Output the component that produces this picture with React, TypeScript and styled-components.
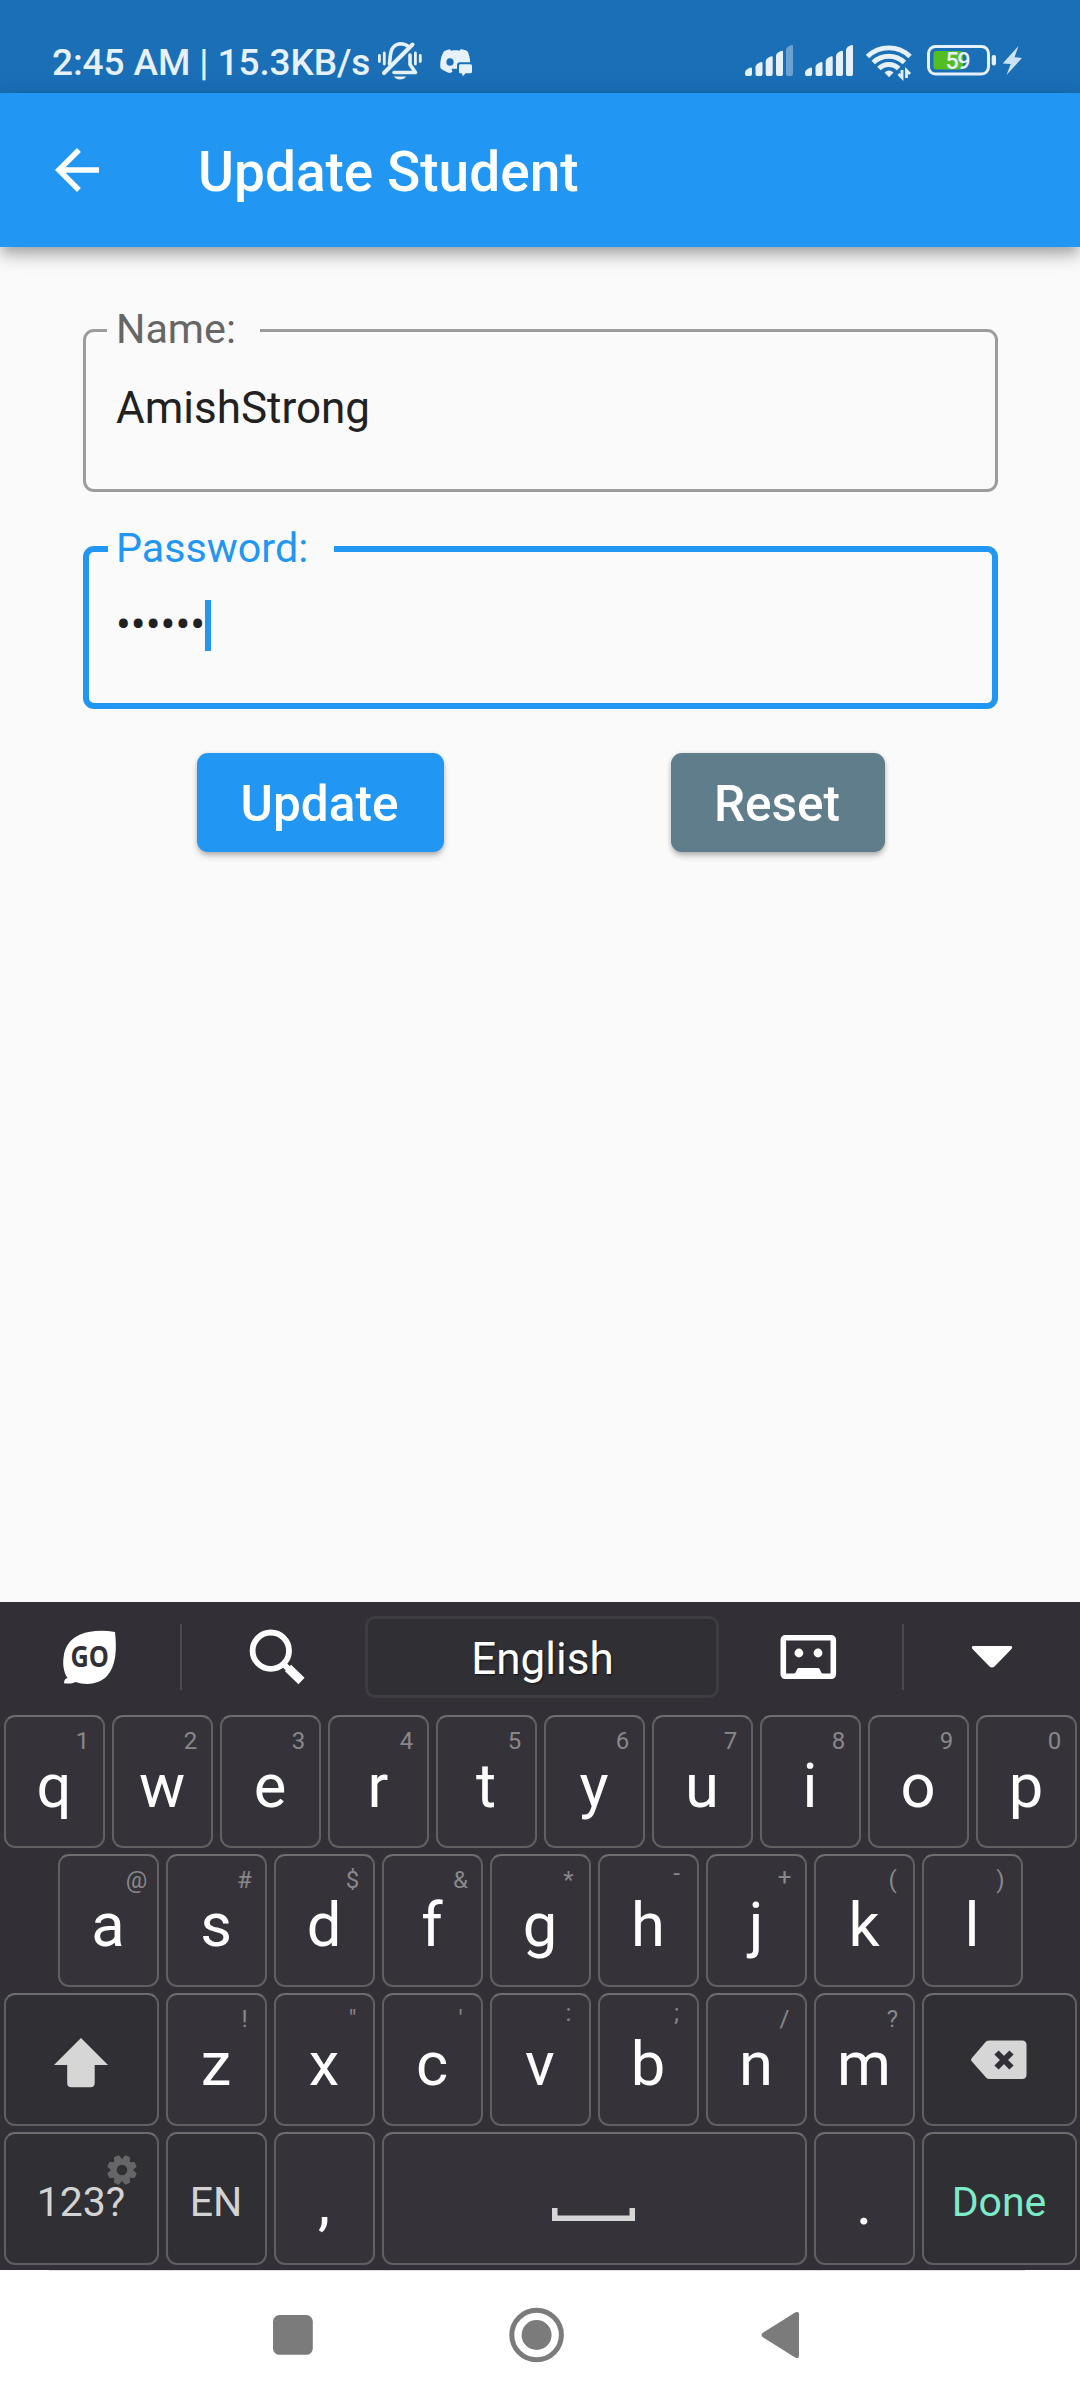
import React from 'react';
import styled, { createGlobalStyle } from 'styled-components';

const GlobalStyle = createGlobalStyle`
  * { box-sizing: border-box; }
  body { margin: 0; background: #fff; }
  svg { display: block; }
`;

const Screen = styled.div`
  width: 1080px;
  height: 2400px;
  display: flex;
  flex-direction: column;
  overflow: hidden;
  background: #fafafa;
  font-family: Roboto, 'Liberation Sans', sans-serif;
`;

/* ---------- status bar ---------- */

const StatusBar = styled.header`
  height: 93px;
  flex: none;
  display: flex;
  align-items: flex-start;
  justify-content: space-between;
  padding: 40px 56px 0 52px;
  background: #1a6fb7;
  color: #e6f1fb;
`;

const StatusGroup = styled.div`
  display: flex;
  height: 44px;
`;

const Clock = styled.span`
  width: 325px;
  padding-top: 1px;
  font-size: 37px;
  font-weight: 500;
  letter-spacing: -0.1px;
  line-height: 44px;
  white-space: nowrap;
`;

const NotificationIcons = styled.div`
  display: flex;
  gap: 15px;
`;

/* ---------- app bar ---------- */

const AppBar = styled.div`
  position: relative;
  height: 154px;
  flex: none;
  display: flex;
  align-items: center;
  padding-left: 44px;
  gap: 88px;
  background: #2196f3;
  color: #fff;
  box-shadow: 0 5.5px 11px -2.75px rgba(0, 0, 0, 0.2), 0 11px 13.75px rgba(0, 0, 0, 0.14),
    0 2.75px 27.5px rgba(0, 0, 0, 0.12);
`;

const Title = styled.h1`
  margin: 3px 0 0;
  font-size: 55px;
  font-weight: 500;
  line-height: 64px;
  white-space: nowrap;
`;

/* ---------- form ---------- */

const Form = styled.main`
  flex: 1;
  display: flex;
  flex-direction: column;
  padding: 82px 82px 0 83px;
`;

const Field = styled.div<{ $active?: boolean }>`
  position: relative;
  height: 163px;
  display: flex;
  align-items: flex-start;
  padding: ${p => (p.$active ? '47px 27px 0' : '50px 30px 0')};
  border: ${p => (p.$active ? '6px solid #2196f3' : '3px solid #9c9c9c')};
  border-radius: 11px;
  color: ${p => (p.$active ? '#2196f3' : '#666')};
  & + & { margin-top: 54px; }
`;

const FieldLabel = styled.label<{ $width: number; $active?: boolean }>`
  position: absolute;
  left: ${p => (p.$active ? 19 : 21)}px;
  top: ${p => (p.$active ? -28 : -27)}px;
  width: ${p => p.$width}px;
  padding-left: ${p => (p.$active ? 8 : 9)}px;
  background: #fafafa;
  font-size: 41.25px;
  line-height: 48px;
  white-space: nowrap;
`;

const Value = styled.span`
  color: #212121;
  font-size: 44px;
  line-height: 52px;
  white-space: nowrap;
`;

const Caret = styled.i`
  width: 6px;
  height: 51px;
  margin: 1px 0 0;
  background: #2196f3;
`;

const Actions = styled.div`
  display: flex;
  justify-content: space-around;
  margin-top: 44px;
`;

const Button = styled.button<{ $bg: string; $width: number }>`
  width: ${p => p.$width}px;
  height: 99px;
  padding: 3px 1px 0 0;
  border: 0;
  border-radius: 11px;
  background: ${p => p.$bg};
  color: #fff;
  font: 500 49.5px/58px Roboto, 'Liberation Sans', sans-serif;
  box-shadow: 0 5px 6px -1px rgba(0, 0, 0, 0.22), 0 1px 5px rgba(0, 0, 0, 0.16);
`;

/* ---------- keyboard ---------- */

const Keyboard = styled.section`
  height: 668px;
  flex: none;
  display: flex;
  flex-direction: column;
  background: #323036;
`;

const Toolbar = styled.div`
  height: 113px;
  flex: none;
  display: flex;
  align-items: flex-start;
  padding-top: 14px;
`;

const Tool = styled.div<{ $width: number }>`
  width: ${p => p.$width}px;
  height: 82px;
  display: flex;
  align-items: center;
  justify-content: center;
`;

const Separator = styled.div`
  width: 2px;
  height: 66px;
  margin-top: 8px;
  background: #4b4a4e;
`;

const Language = styled.div`
  width: 354px;
  height: 82px;
  padding: 1px 0 0 1px;
  border: 3px solid #3e3d42;
  border-radius: 10px;
  background: #302f34;
  color: #fff;
  font-size: 44px;
  line-height: 79px;
  text-align: center;
  text-shadow: 1px 1px 2px rgba(0, 0, 0, 0.6);
`;

const Rows = styled.div`
  display: flex;
  flex-direction: column;
  gap: 6px;
`;

const Row = styled.div`
  display: flex;
  justify-content: center;
  gap: 7px;
`;

const Key = styled.div<{ $width?: number; $dark?: boolean }>`
  position: relative;
  width: ${p => p.$width ?? 101}px;
  height: 133px;
  display: flex;
  align-items: center;
  justify-content: center;
  border: 2px solid #605f62;
  border-top-color: #6d6c6e;
  border-radius: 11px;
  background: ${p => (p.$dark ? '#302f34' : '#353339')};
`;

const Letter = styled.span`
  padding-top: 9px;
  color: #fff;
  font-size: 61.5px;
  line-height: 72px;
`;

const Caption = styled.span<{ $color?: string }>`
  padding-top: 7px;
  color: ${p => p.$color ?? '#d3d3d3'};
  font-size: 41px;
  line-height: 48px;
`;

const Hint = styled.span<{ $raise: number }>`
  position: absolute;
  left: 57px;
  top: ${p => 10 - p.$raise}px;
  width: 40px;
  color: #88878a;
  font-size: 24px;
  line-height: 28px;
  text-align: center;
`;

const KeyBadge = styled.div`
  position: absolute;
  left: 101px;
  top: 21px;
`;

/* ---------- navigation bar ---------- */

const NavBar = styled.nav`
  height: 130px;
  flex: none;
  display: flex;
  flex-direction: column;
  background: #fff;
`;

const NavLine = styled.div`
  height: 1px;
  margin: 0 55px 0 49px;
  background: #dedede;
`;

const NavButtons = styled.div`
  flex: 1;
  display: flex;
  align-items: center;
  padding: 0 0 2px 262px;
  gap: 184px;
`;

/* ---------- icons ---------- */

const BellOff = () => (
  <svg width="46" height="44" viewBox="377 40 46 44" fill="none" stroke="#e6f1fb" strokeLinecap="round">
    <path d="M379.4 55.5v6M384.3 53v11M415.4 53v11M420.3 55.5v6" strokeWidth="2.8" />
    <path d="M389.5 64c1-8 0-19 10.5-20.3 4.2 0 7 1.3 9 3.5" strokeWidth="3.6" />
    <path d="M410 55v9.5l5.5 8H394" strokeWidth="3.6" strokeLinejoin="round" />
    <path d="M412.5 44.5L384 73" strokeWidth="4" />
    <path d="M394 76.5h12c-1.5 4-10.5 4-12 0z" fill="#e6f1fb" stroke="none" />
  </svg>
);

const GameChat = () => (
  <svg width="36" height="44" viewBox="438 40 36 44" fill="#e6f1fb">
    <path
      fillRule="evenodd"
      d="M450 49.2l1 1.5c3-.5 6-.5 8.5 0l1-1.5c3 .3 5.5 1 7 2 1.5 3 2.5 6.5 2.6 11H460q-3 0-3 3v3.5h-5.5l1 3-2.5 1.3c-3-.6-6.5-2.3-9.5-4.8-.8-7 1-13.5 3.5-17 2-1 4-1.700 6-2zM450 58.200a3.600 3.800 0 1 0 0 7.600 3.600 3.800 0 1 0 0-7.600z"
    />
    <path d="M460 64.3h10.5q1.5 0 1.5 1.5v6q0 1.5-1.5 1.5h-5l-2.5 3-1.3-3h-1.700q-1 0-1-1.500v-6q0-1.500 1-1.500z" />
  </svg>
);

const BARS = [
  { x: 0, top: 67.5 },
  { x: 10.5, top: 62 },
  { x: 20.7, top: 56.3 },
  { x: 31, top: 50.7 },
  { x: 41, top: 45 },
];

const Signal = ({ weak }: { weak?: boolean }) => (
  <svg width="60" height="44" viewBox="0 40 60 44" fill="#e6f1fb">
    {BARS.map((b, i) => (
      <path
        key={b.x}
        opacity={weak && i === 4 ? 0.4 : 1}
        d={`M${b.x} ${b.top + 5}q0-2.5 5-4.7q2-.8 2 .8V74q0 2-1.7 2h-3.6q-1.7 0-1.7-2z`}
      />
    ))}
  </svg>
);

const Wifi = () => (
  <svg width="62" height="44" viewBox="865 40 62 44" fill="none" stroke="#e6f1fb" strokeWidth="4.9">
    <path d="M867.5 56.5a30.5 30.5 0 0 1 42.6 0" />
    <path d="M873.2 62.6a22.5 22.5 0 0 1 31.2 0" />
    <path d="M878.9 68.6a14 14 0 0 1 19.8 0" />
    <path d="M884.5 72.5q4.5-4 9 0l-4.5 4.8z" fill="#e6f1fb" stroke="none" />
    <path d="M902 70v7.5l-3.5-3.5M906.5 78V70.5l3.5 3.5" strokeWidth="2.8" />
  </svg>
);

const Battery = () => (
  <svg width="74" height="44" viewBox="927 40 74 44">
    <rect x="928.5" y="46.5" width="60" height="27.5" rx="7" fill="none" stroke="#e6f1fb" strokeWidth="3" />
    <rect x="933.5" y="51" width="29.5" height="18.5" rx="3" fill="#53bd22" />
    <rect x="991.7" y="55" width="4.3" height="10.5" rx="2" fill="#e6f1fb" />
    <text x="945.5" y="69" fill="#e6f1fb" fontFamily="Roboto, sans-serif" fontSize="23.5" fontWeight="500" textLength="25">
      59
    </text>
  </svg>
);

const Bolt = () => (
  <svg width="23" height="44" viewBox="1001 40 23 44" fill="#cfe2f3">
    <path d="M1018.5 46l-15.8 17.5 8 .5-4.2 11 15.5-17-7.5-.8z" />
  </svg>
);

const BackArrow = () => (
  <svg width="66" height="66" viewBox="0 0 24 24" fill="#fff">
    <path d="M20 11H7.83l5.59-5.59L12 4l-8 8 8 8 1.41-1.41L7.83 13H20v-2z" />
  </svg>
);

const GoLogo = () => (
  <svg width="60" height="60" viewBox="60 1627 60 60">
    <path
      d="M115 1632c2 18 1 34-8 44-8 8.5-21 9.5-31.5 6-3 1.7-7.5 1.8-11.5 1.2.2-3 .8-4.5 3.5-5.2-4-6-5-14-3.8-21.5 1-10 7-18 16.5-22 10-4.3 23-4.5 34.8-2.5z"
      fill="#fff"
    />
    <text x="70.5" y="1667" fill="#323036" fontFamily="'Open Sans', sans-serif" fontSize="28" fontWeight="700" textLength="38.5" lengthAdjust="spacingAndGlyphs">
      GO
    </text>
  </svg>
);

const Search = () => (
  <svg width="60" height="60" viewBox="243.5 1627 60 60" fill="none" stroke="#fff" overflow="visible">
    <circle cx="270.3" cy="1650.7" r="18.2" strokeWidth="5.8" />
    <path d="M287.5 1668L301 1681" strokeWidth="8.8" />
    <path d="M283.5 1664.5l5 5" strokeWidth="6" />
  </svg>
);

const Face = () => (
  <svg width="60" height="60" viewBox="780.5 1627 60 60" overflow="visible">
    <rect x="782.8" y="1637.8" width="50" height="38.5" rx="2" fill="none" stroke="#fff" strokeWidth="5.6" />
    <circle cx="798.4" cy="1653" r="4.4" fill="#fff" />
    <circle cx="817.5" cy="1653" r="4.4" fill="#fff" />
    <path d="M793.3 1674q2-1 2.7-3.5.6-2.5 2-2.5h19.8q1.4 0 2 2.5.8 2.5 2.7 3.5v1.5h-29.2z" fill="#fff" />
  </svg>
);

const Collapse = () => (
  <svg width="42" height="24" viewBox="0 0 42 24">
    <path d="M1.5 1h39q1.5 1.5 0 3L23.5 21.5q-2.5 2-5 0L1.5 4q-1.5-1.5 0-3z" fill="#fff" />
  </svg>
);

const ShiftSlot = styled.div`
  padding-top: 6px;
`;

const Shift = () => (
  <svg width="54" height="50" viewBox="0 0 54 50">
    <path d="M27 0L54 27H40.7V45q0 4.3-4.3 4.3H17.5q-4.3 0-4.3-4.3V27H0z" fill="#d6d6d6" />
  </svg>
);

const Backspace = () => (
  <svg width="56" height="40" viewBox="0 0 56 40">
    <path d="M15 1.5Q16.5.5 18.5.5H51q4.5 0 4.5 4.5V34.5q0 4.5-4.5 4.5H18.5q-2 0-3.5-1.5L.5 21q-.8-1.3 0-2.6z" fill="#d6d6d6" />
    <path d="M25.5 12.5l15 15M40.5 12.5l-15 15" stroke="#323036" strokeWidth="6" />
  </svg>
);

const Gear = () => (
  <svg width="30" height="30" viewBox="-15 -15 30 30">
    <circle r="8.3" fill="none" stroke="#666567" strokeWidth="6" />
    {[0, 1, 2, 3, 4, 5, 6, 7].map(i => (
      <path key={i} d="M-4.2-10L-2.6-14.8Q0-14.8 2.6-14.8L4.2-10z" fill="#666567" transform={`rotate(${22.5 + i * 45})`} />
    ))}
  </svg>
);

const SpaceMark = () => (
  <svg width="83" height="13" viewBox="0 0 83 13">
    <path d="M2.75 0v10.25h77.5V0" fill="none" stroke="#d6d6d6" strokeWidth="5.5" />
  </svg>
);

const SpaceSlot = styled.div`
  padding: 31px 2px 0 0;
`;

const Recents = () => (
  <svg width="60" height="60" viewBox="0 0 60 60">
    <rect x="11" y="10" width="39.8" height="39.8" rx="6.5" fill="#7b7b7b" />
  </svg>
);

const Home = () => (
  <svg width="60" height="60" viewBox="0 0 60 60">
    <circle cx="30.6" cy="30" r="24.8" fill="none" stroke="#7b7b7b" strokeWidth="5" />
    <circle cx="30.6" cy="30" r="15" fill="#7b7b7b" />
  </svg>
);

const Back = () => (
  <svg width="60" height="60" viewBox="0 0 60 60">
    <path d="M12.5 28L45.5 7.3Q49 6 49 9V51Q49 54 45.5 52.7L12.5 32Q10.5 30 12.5 28z" fill="#7b7b7b" />
  </svg>
);

/* ---------- data ---------- */

type KeyDef = [letter: string, hint: string, raise?: number];

const ROW_1: KeyDef[] = [
  ['q', '1'], ['w', '2'], ['e', '3'], ['r', '4'], ['t', '5'],
  ['y', '6'], ['u', '7'], ['i', '8'], ['o', '9'], ['p', '0'],
];
const ROW_2: KeyDef[] = [
  ['a', '@'], ['s', '#'], ['d', '$'], ['f', '&'], ['g', '*'],
  ['h', '-', 7], ['j', '+', 3], ['k', '('], ['l', ')'],
];
const ROW_3: KeyDef[] = [
  ['z', '!'], ['x', '"'], ['c', "'"], ['v', ':', 6], ['b', ';', 6], ['n', '/'], ['m', '?'],
];

const LetterKeys = ({ keys }: { keys: KeyDef[] }) => (
  <>
    {keys.map(([letter, hint, raise = 0]) => (
      <Key key={letter}>
        <Letter>{letter}</Letter>
        <Hint $raise={raise}>{hint}</Hint>
      </Key>
    ))}
  </>
);

export default function App() {
  return (
    <>
      <GlobalStyle />
      <Screen>
        <StatusBar>
          <StatusGroup>
            <Clock>2:45 AM | 15.3KB/s</Clock>
            <NotificationIcons>
              <BellOff />
              <GameChat />
            </NotificationIcons>
          </StatusGroup>
          <StatusGroup>
            <Signal weak />
            <Signal />
            <Wifi />
            <Battery />
            <Bolt />
          </StatusGroup>
        </StatusBar>

        <AppBar>
          <BackArrow />
          <Title>Update Student</Title>
        </AppBar>

        <Form>
          <Field>
            <FieldLabel $width={153}>Name:</FieldLabel>
            <Value>AmishStrong</Value>
          </Field>
          <Field $active>
            <FieldLabel $width={226} $active>Password:</FieldLabel>
            <Value>••••••</Value>
            <Caret />
          </Field>
          <Actions>
            <Button $bg="#2196f3" $width={247}>Update</Button>
            <Button $bg="#607d8b" $width={214}>Reset</Button>
          </Actions>
        </Form>

        <Keyboard>
          <Toolbar>
            <Tool $width={180}><GoLogo /></Tool>
            <Separator />
            <Tool $width={183}><Search /></Tool>
            <Language>English</Language>
            <Tool $width={183}><Face /></Tool>
            <Separator />
            <Tool $width={176}><Collapse /></Tool>
          </Toolbar>
          <Rows>
            <Row><LetterKeys keys={ROW_1} /></Row>
            <Row><LetterKeys keys={ROW_2} /></Row>
            <Row>
              <Key $width={155} $dark><ShiftSlot><Shift /></ShiftSlot></Key>
              <LetterKeys keys={ROW_3} />
              <Key $width={155} $dark><Backspace /></Key>
            </Row>
            <Row>
              <Key $width={155} $dark>
                <Caption>123?</Caption>
                <KeyBadge><Gear /></KeyBadge>
              </Key>
              <Key $dark><Caption>EN</Caption></Key>
              <Key><Letter>,</Letter></Key>
              <Key $width={425}><SpaceSlot><SpaceMark /></SpaceSlot></Key>
              <Key><Letter>.</Letter></Key>
              <Key $width={155} $dark><Caption $color="#7cebc8">Done</Caption></Key>
            </Row>
          </Rows>
        </Keyboard>

        <NavBar>
          <NavLine />
          <NavButtons>
            <Recents />
            <Home />
            <Back />
          </NavButtons>
        </NavBar>
      </Screen>
    </>
  );
}
